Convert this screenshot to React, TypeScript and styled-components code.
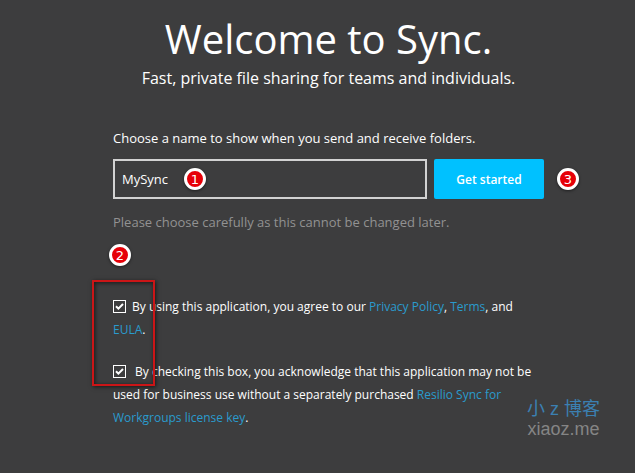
import React, { useState } from "react";
import styled, { createGlobalStyle } from "styled-components";

const GlobalStyle = createGlobalStyle`
  * {
    box-sizing: border-box;
  }

  body {
    margin: 0;
    background: #3d3d3e;
    color: #fff;
    font-family: "Open Sans", "Noto Sans", sans-serif;
  }
`;

const Page = styled.main`
  position: relative;
  display: flex;
  flex-direction: column;
  align-items: center;
  min-height: 100vh;
  padding: 12px 0 40px 22px;
`;

const Title = styled.h1`
  margin: 0;
  font-size: 40px;
  font-weight: 400;
  line-height: 54px;
  text-align: center;
`;

const Subtitle = styled.p`
  margin: 0;
  font-size: 16px;
  line-height: 24px;
  text-align: center;
`;

const Form = styled.form`
  width: 100%;
  max-width: 431px;
  margin-top: 38px;
`;

const Label = styled.label`
  display: block;
  font-size: 13px;
  line-height: 20px;
`;

const NameRow = styled.div`
  position: relative;
  display: flex;
  gap: 7px;
  margin-top: 11px;
`;

const NameInput = styled.input`
  flex: 1;
  min-width: 0;
  height: 40px;
  padding: 0 7px;
  border: 2px solid #d2d2d2;
  border-radius: 0;
  outline: none;
  background: transparent;
  color: #fff;
  font: 13px "Open Sans", sans-serif;
`;

const StartButton = styled.button`
  width: 110px;
  height: 40px;
  padding: 0;
  border: 0;
  border-radius: 2px;
  background: #00c1ff;
  color: #fff;
  font: 600 12px "Open Sans", sans-serif;
  cursor: pointer;
`;

const Hint = styled.p`
  margin: 13px 0 0;
  color: #929292;
  font-size: 13px;
  line-height: 20px;
`;

const Agreements = styled.div`
  position: relative;
  display: flex;
  flex-direction: column;
  gap: 19px;
  margin-top: 63px;
`;

const Agreement = styled.div<{ $gap: number }>`
  font-size: 12px;
  line-height: 23px;

  input {
    margin-right: ${(p) => p.$gap}px;
  }
`;

const Checkbox = styled.input`
  appearance: none;
  width: 13px;
  height: 13px;
  margin: 0;
  border: 1px solid #fff;
  vertical-align: -2px;

  &:checked {
    background: center / 11px 11px no-repeat
      url("data:image/svg+xml,%3Csvg xmlns='http://www.w3.org/2000/svg' viewBox='0 0 11 11'%3E%3Cpath d='M2 5.3 4.4 7.7 9 3' fill='none' stroke='white' stroke-width='2'/%3E%3C/svg%3E");
  }
`;

const Link = styled.a`
  color: #2a9bcd;
  text-decoration: none;
`;

const Marker = styled.span<{ $left: number; $top: number }>`
  position: absolute;
  left: ${(p) => p.$left}px;
  top: ${(p) => p.$top}px;
  display: flex;
  align-items: center;
  justify-content: center;
  width: 22px;
  height: 22px;
  border: 3px solid #fff;
  border-radius: 50%;
  background: #e60008;
  box-shadow: 0 1px 3px rgba(0, 0, 0, 0.5);
  color: #fff;
  font: 13px "DejaVu Sans", sans-serif;
  pointer-events: none;
`;

const Highlight = styled.div`
  position: absolute;
  left: -21px;
  top: -15px;
  width: 63px;
  height: 106px;
  border: 2px solid #cb1517;
  box-shadow: 1px 1px 4px rgba(0, 0, 0, 0.6), inset 1px 1px 4px rgba(0, 0, 0, 0.6);
  pointer-events: none;
`;

const Watermark = styled.div`
  position: absolute;
  right: 35px;
  bottom: 34px;
  color: #858585;
  font: 18px/20px "Liberation Sans", "Noto Sans CJK SC", sans-serif;
  text-align: center;
`;

const WatermarkName = styled.div`
  color: #3b80b2;
`;

export default function App() {
  const [name, setName] = useState("MySync");

  return (
    <>
      <GlobalStyle />
      <Page>
        <Title>Welcome to Sync.</Title>
        <Subtitle>Fast, private file sharing for teams and individuals.</Subtitle>
        <Form onSubmit={(e) => e.preventDefault()}>
          <Label htmlFor="name">Choose a name to show when you send and receive folders.</Label>
          <NameRow>
            <NameInput id="name" value={name} onChange={(e) => setName(e.target.value)} />
            <StartButton type="submit">Get started</StartButton>
            <Marker $left={71} $top={9}>1</Marker>
            <Marker $left={444} $top={9}>3</Marker>
          </NameRow>
          <Hint>Please choose carefully as this cannot be changed later.</Hint>
          <Agreements>
            <Agreement $gap={6}>
              <Checkbox type="checkbox" id="terms" defaultChecked />
              <label htmlFor="terms">
                By using this application, you agree to our <Link href="#privacy">Privacy Policy</Link>,{" "}
                <Link href="#terms">Terms</Link>, and <Link href="#eula">EULA</Link>.
              </label>
            </Agreement>
            <Agreement $gap={9}>
              <Checkbox type="checkbox" id="license" defaultChecked />
              <label htmlFor="license">
                By checking this box, you acknowledge that this application may not be used for business use without a
                separately purchased <Link href="#license">Resilio Sync for Workgroups license key</Link>.
              </label>
            </Agreement>
            <Highlight />
            <Marker $left={-4} $top={-51}>2</Marker>
          </Agreements>
        </Form>
        <Watermark>
          <WatermarkName>小 z 博客</WatermarkName>
          xiaoz.me
        </Watermark>
      </Page>
    </>
  );
}
